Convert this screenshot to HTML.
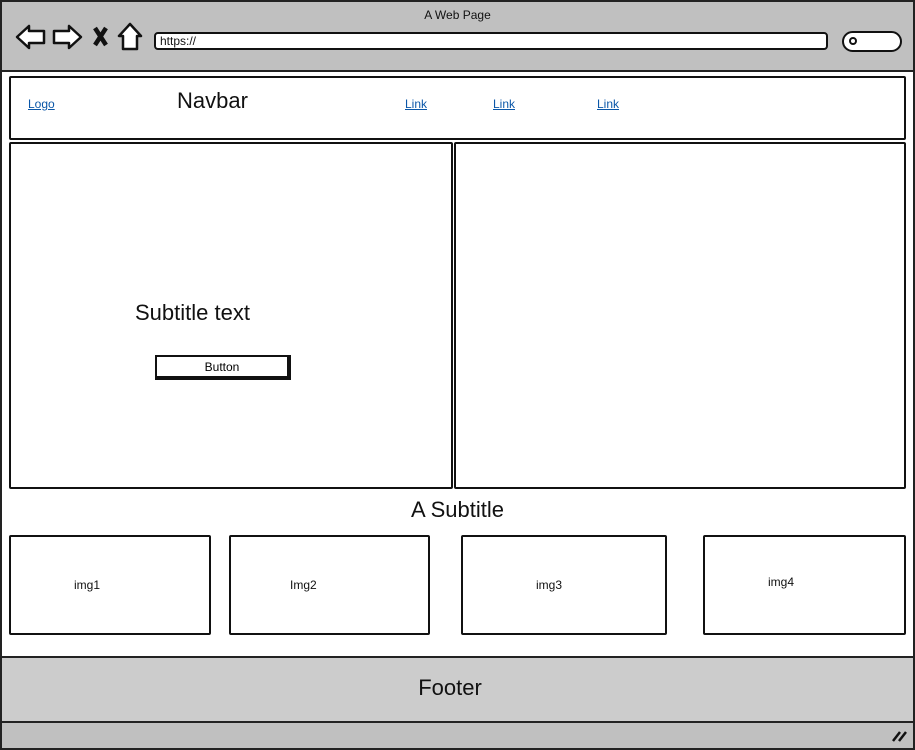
<!DOCTYPE html>
<html><head><style>
*{margin:0;padding:0;box-sizing:border-box}
body{width:915px;height:750px;background:#fff;font-family:"Liberation Sans",sans-serif;position:relative;overflow:hidden}
.a{position:absolute}
.b{border:2px solid #111;border-radius:2px}
.l{color:#0b57a8;text-decoration:underline;font-size:12px}
.t{font-size:12px;color:#111}
</style></head><body>
<div class="a" style="left:0;top:0;width:915px;height:750px;border:2px solid #222;background:#fff"></div>
<div class="a" style="left:2px;top:2px;width:911px;height:70px;background:#c0c0c0;border-bottom:2px solid #222"></div>
<div class="a t" style="left:0;top:8px;width:915px;text-align:center">A Web Page</div>
<svg class="a" style="left:14px;top:22px" width="130" height="30" viewBox="0 0 130 30">
<path d="M3 15 L15 4 L15 9 L30 9 L30 21 L15 21 L15 26 Z" fill="#fff" stroke="#111" stroke-width="2.5" stroke-linejoin="round"/>
<path d="M67 15 L55 4 L55 9 L40 9 L40 21 L55 21 L55 26 Z" fill="#fff" stroke="#111" stroke-width="2.5" stroke-linejoin="round"/>
<path d="M81 6 L92 23 M92 6 L81 23" stroke="#111" stroke-width="4.5"/>
<path d="M116 2 L105 14 L109 14 L109 27 L123 27 L123 14 L127 14 Z" fill="#fff" stroke="#111" stroke-width="2.5" stroke-linejoin="round"/>
</svg>
<div class="a" style="left:154px;top:32px;width:674px;height:18px;background:#fff;border:2.5px solid #111;border-radius:4px"></div>
<div class="a t" style="left:160px;top:34px">https://</div>
<div class="a" style="left:842px;top:31px;width:60px;height:21px;background:#fff;border:2.5px solid #111;border-radius:11px"></div>
<div class="a" style="left:849px;top:37px;width:8px;height:8px;border:2px solid #111;border-radius:50%"></div>
<div class="a b" style="left:9px;top:76px;width:897px;height:64px"></div>
<div class="a l" style="left:28px;top:97px">Logo</div>
<div class="a" style="left:177px;top:88px;font-size:22px;color:#111">Navbar</div>
<div class="a l" style="left:405px;top:97px">Link</div>
<div class="a l" style="left:493px;top:97px">Link</div>
<div class="a l" style="left:597px;top:97px">Link</div>
<div class="a b" style="left:9px;top:142px;width:444px;height:347px"></div>
<div class="a b" style="left:454px;top:142px;width:452px;height:347px"></div>
<div class="a" style="left:135px;top:300px;font-size:22px;color:#111">Subtitle text</div>
<div class="a" style="left:155px;top:355px;width:136px;height:25px;border:2px solid #111;border-right-width:4px;border-bottom-width:4px;background:#fff;font-size:12px;text-align:center;line-height:20px">Button</div>
<div class="a" style="left:0;top:497px;width:915px;text-align:center;font-size:22px;color:#111">A Subtitle</div>
<div class="a b" style="left:9px;top:535px;width:202px;height:100px"></div>
<div class="a b" style="left:229px;top:535px;width:201px;height:100px"></div>
<div class="a b" style="left:461px;top:535px;width:206px;height:100px"></div>
<div class="a b" style="left:703px;top:535px;width:203px;height:100px"></div>
<div class="a t" style="left:74px;top:578px">img1</div>
<div class="a t" style="left:290px;top:578px">Img2</div>
<div class="a t" style="left:536px;top:578px">img3</div>
<div class="a t" style="left:768px;top:575px">img4</div>
<div class="a" style="left:2px;top:656px;width:911px;height:67px;background:#ccc;border-top:2px solid #222;border-bottom:2px solid #222"></div>
<div class="a" style="left:0;top:675px;width:900px;text-align:center;font-size:22px;color:#111">Footer</div>
<div class="a" style="left:2px;top:723px;width:911px;height:25px;background:#c0c0c0"></div>
<svg class="a" style="left:890px;top:728px" width="18" height="16"><path d="M3 13 L10 4 M9 13 L16 4" stroke="#111" stroke-width="2.5"/></svg>
</body></html>
